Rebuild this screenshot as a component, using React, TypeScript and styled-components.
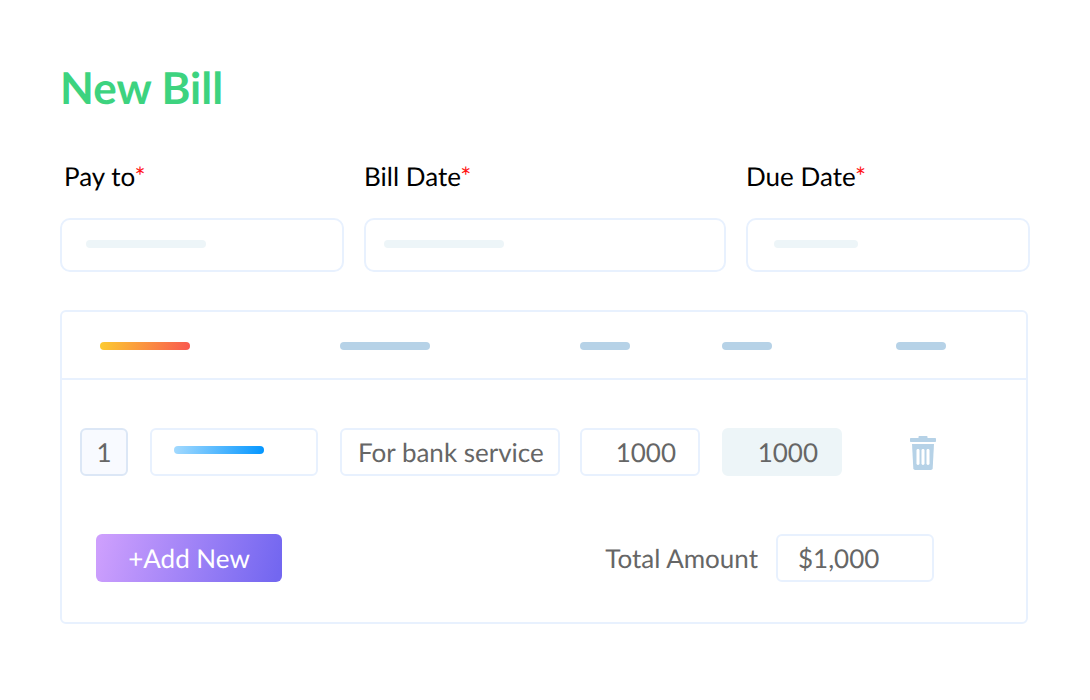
import React from 'react';
import styled, { createGlobalStyle, css } from 'styled-components';

const GlobalStyle = createGlobalStyle`
  *, *::before, *::after { box-sizing: border-box; }
  body {
    margin: 0;
    background: #ffffff;
    color: #666666;
    font: 400 26px/32px Lato, "Liberation Sans", sans-serif;
    text-rendering: geometricPrecision;
  }
  input, button { font: inherit; color: inherit; text-rendering: inherit; }
`;

const line = '#e8f1fe';

const Page = styled.main`
  padding: 60px;
`;

const Title = styled.h1`
  margin: 0 0 44px;
  color: #3dd37f;
  font-size: 44px;
  line-height: 56px;
  font-weight: 700;
`;

const FieldGrid = styled.div`
  display: grid;
  grid-template-columns: 284fr 362fr 284fr;
  gap: 20px;
`;

const Field = styled.div`
  display: flex;
  flex-direction: column;
  gap: 26px;
  min-width: 0;
`;

const Label = styled.label<{ $indent?: number }>`
  padding-left: ${({ $indent = 0 }) => $indent}px;
  color: #000000;
`;

const Required = styled.span`
  color: #ff1414;
`;

const frame = css`
  border: 2px solid ${line};
  border-radius: 6px;
  background: #ffffff;
`;

const FieldBox = styled.div<{ $inset: number }>`
  ${frame}
  display: flex;
  align-items: center;
  height: 54px;
  padding: 0 18px 2px ${({ $inset }) => $inset}px;
  border-radius: 10px;
`;

const AccountBox = styled.div`
  ${frame}
  display: flex;
  align-items: center;
  height: 48px;
  padding: 0 16px 4px 22px;
`;

const BareInput = styled.input`
  flex: 1;
  min-width: 0;
  padding: 0;
  border: 0;
  outline: 0;
  background: transparent;
`;

const Bar = styled.span<{ $width: number; $fill?: string }>`
  display: block;
  flex: none;
  width: ${({ $width }) => $width}px;
  height: 8px;
  border-radius: 4px;
  background: ${({ $fill = '#b6d2e7' }) => $fill};
`;

const Card = styled.section`
  margin: 38px 2px 0 0;
  border: 2px solid ${line};
  border-radius: 6px;
`;

const Table = styled.table`
  width: 100%;
  table-layout: fixed;
  border-spacing: 0;
`;

const Col = styled.col<{ $width?: number }>`
  width: ${({ $width }) => ($width ? `${$width}px` : 'auto')};
`;

const HeadCell = styled.th<{ $left?: number }>`
  padding: 30px 0 28px ${({ $left = 0 }) => $left}px;
  border-bottom: 2px solid ${line};
`;

const Cell = styled.td<{ $left?: number; $right?: number }>`
  height: 96px;
  padding: 48px ${({ $right = 0 }) => $right}px 0 ${({ $left = 0 }) => $left}px;
  vertical-align: top;
`;

const RowNumber = styled.div`
  width: 48px;
  height: 48px;
  padding-top: 6px;
  border: 2px solid #dce7f6;
  border-radius: 6px;
  background: #f8faff;
  text-align: center;
`;

const TextInput = styled.input<{ $numeric?: boolean; $filled?: boolean }>`
  ${frame}
  display: block;
  width: 100%;
  height: 48px;
  padding: 0 ${({ $numeric }) => ($numeric ? 22 : 0)}px 0 16px;
  text-align: ${({ $numeric }) => ($numeric ? 'right' : 'left')};
  ${({ $filled }) =>
    $filled &&
    css`
      border-color: #edf5f8;
      background: #edf5f8;
    `}
`;

const IconButton = styled.button`
  display: block;
  margin-top: 8px;
  padding: 0;
  border: 0;
  background: none;
  cursor: pointer;

  svg { display: block; }
`;

const Footer = styled.div`
  display: flex;
  align-items: center;
  justify-content: space-between;
  padding: 58px 92px 40px 34px;
`;

const AddButton = styled.button`
  width: 186px;
  height: 48px;
  padding: 0;
  border: 0;
  border-radius: 6px;
  background: linear-gradient(105deg, #cd9ffd 3%, #7367f0 97%);
  color: #ffffff;
  cursor: pointer;
`;

const Total = styled.div`
  display: flex;
  align-items: center;
  gap: 18px;
`;

const TotalInput = styled(TextInput)`
  width: 158px;
  padding-left: 20px;
`;

const TrashIcon = () => (
  <svg width="26" height="34" viewBox="0 0 26 34" aria-hidden="true">
    <path
      fill="#b6d2e7"
      d="M8.5 2V.8Q8.5 0 9.3 0h7.4q.8 0 .8.8V2h7.7q.8 0 .8.8v2.4q0 .8-.8.8H.8Q0 6 0 5.2V2.8Q0 2 .8 2z"
    />
    <path fill="#b6d2e7" d="M2 8h22l-1.300 24.200q-.1 1.800-1.900 1.800H5.200q-1.800 0-1.900-1.800z" />
    <g fill="#ffffff">
      <rect x="6.500" y="13" width="3" height="16" rx="1.400" />
      <rect x="11.500" y="13" width="3" height="16" rx="1.400" />
      <rect x="16.500" y="13" width="3" height="16" rx="1.400" />
    </g>
  </svg>
);

const fields = [
  { id: 'pay-to', label: 'Pay to', indent: 4, inset: 24, bar: 120 },
  { id: 'bill-date', label: 'Bill Date', indent: 0, inset: 18, bar: 120 },
  { id: 'due-date', label: 'Due Date', indent: 0, inset: 26, bar: 84 },
];

export default function App() {
  return (
    <>
      <GlobalStyle />
      <Page>
        <Title>New Bill</Title>
        <FieldGrid>
          {fields.map(({ id, label, indent, inset, bar }) => (
            <Field key={id}>
              <Label htmlFor={id} $indent={indent}>
                {label}
                <Required>*</Required>
              </Label>
              <FieldBox $inset={inset}>
                <Bar $width={bar} $fill="#edf5f8" />
                <BareInput id={id} required />
              </FieldBox>
            </Field>
          ))}
        </FieldGrid>
        <Card>
          <Table>
            <colgroup>
              <Col $width={88} />
              <Col $width={190} />
              <Col />
              <Col $width={142} />
              <Col $width={174} />
              <Col $width={130} />
            </colgroup>
            <thead>
              <tr>
                <HeadCell colSpan={2} $left={38} aria-label="Account">
                  <Bar $width={90} $fill="linear-gradient(100deg, #fccb30, #f9584f)" />
                </HeadCell>
                <HeadCell aria-label="Description">
                  <Bar $width={90} />
                </HeadCell>
                <HeadCell aria-label="Amount">
                  <Bar $width={50} />
                </HeadCell>
                <HeadCell aria-label="Total">
                  <Bar $width={50} />
                </HeadCell>
                <HeadCell aria-label="Action">
                  <Bar $width={50} />
                </HeadCell>
              </tr>
            </thead>
            <tbody>
              <tr>
                <Cell $left={18}>
                  <RowNumber>1</RowNumber>
                </Cell>
                <Cell $right={22}>
                  <AccountBox>
                    <Bar $width={90} $fill="linear-gradient(100deg, #a4dafe, #0396ff)" />
                    <BareInput aria-label="Account" />
                  </AccountBox>
                </Cell>
                <Cell $right={20}>
                  <TextInput aria-label="Description" defaultValue="For bank service" />
                </Cell>
                <Cell $right={22}>
                  <TextInput $numeric aria-label="Amount" defaultValue="1000" />
                </Cell>
                <Cell $right={54}>
                  <TextInput $numeric $filled readOnly aria-label="Total" value="1000" />
                </Cell>
                <Cell $left={14}>
                  <IconButton type="button" aria-label="Delete row">
                    <TrashIcon />
                  </IconButton>
                </Cell>
              </tr>
            </tbody>
          </Table>
          <Footer>
            <AddButton type="button">+Add New</AddButton>
            <Total>
              <label htmlFor="total-amount">Total Amount</label>
              <TotalInput id="total-amount" readOnly value="$1,000" />
            </Total>
          </Footer>
        </Card>
      </Page>
    </>
  );
}
